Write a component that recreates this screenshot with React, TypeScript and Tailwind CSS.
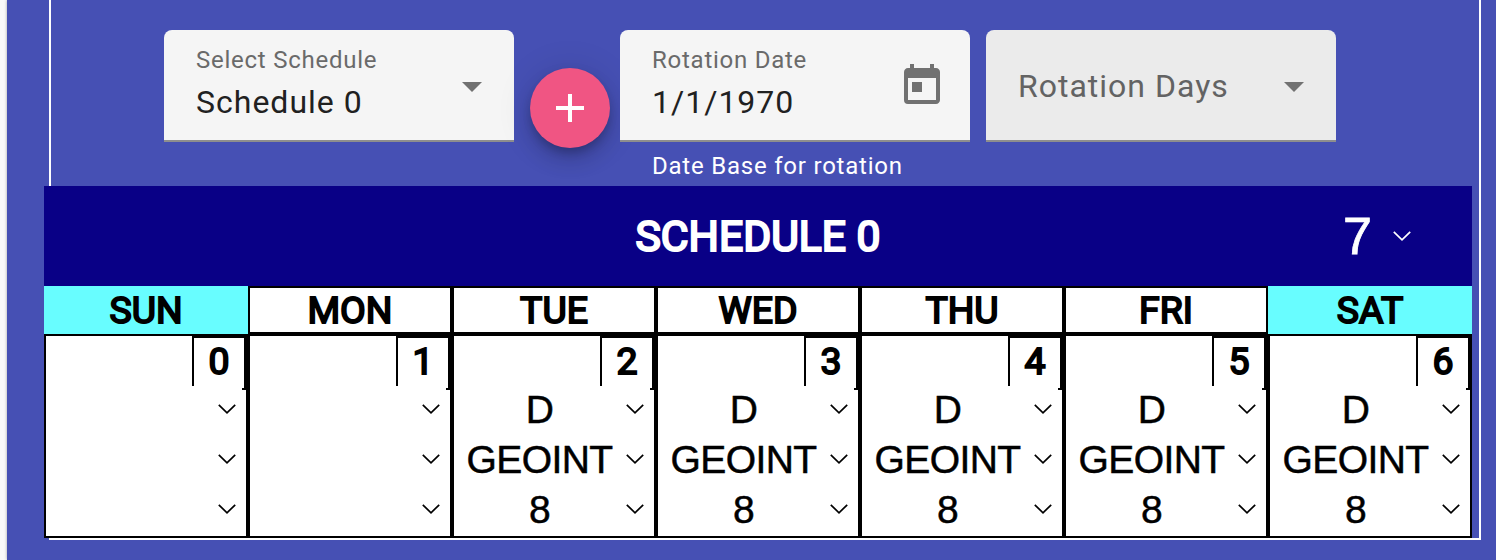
import type { ReactNode } from "react";
import { MdAdd, MdToday } from "react-icons/md";

type Day = { name: string; weekend?: boolean; values: [string, string, string] };

const EMPTY: [string, string, string] = ["", "", ""];
const SHIFT: [string, string, string] = ["D", "GEOINT", "8"];

const DAYS: Day[] = [
  { name: "SUN", weekend: true, values: EMPTY },
  { name: "MON", values: EMPTY },
  { name: "TUE", values: SHIFT },
  { name: "WED", values: SHIFT },
  { name: "THU", values: SHIFT },
  { name: "FRI", values: SHIFT },
  { name: "SAT", weekend: true, values: SHIFT },
];

function Caret() {
  return (
    <svg className="h-2.5 w-5 shrink-0 text-[#717171]" viewBox="0 0 20 10" fill="currentColor">
      <path d="M0 0h20L10 10z" />
    </svg>
  );
}

function Chevron() {
  return (
    <svg
      className="h-[10px] w-[18px] shrink-0"
      viewBox="0 0 18 10"
      fill="none"
      stroke="currentColor"
      strokeWidth="1.7"
    >
      <path d="M0.8 0.8 9 8.8 17.2 0.8" />
    </svg>
  );
}

function Field({
  label,
  value,
  disabled,
  children,
}: {
  label: string;
  value?: string;
  disabled?: boolean;
  children: ReactNode;
}) {
  return (
    <div
      className={`flex h-28 w-[350px] items-start justify-between rounded-t-lg border-b-2 border-[#8e8e8e] pl-8 ${
        disabled ? "bg-[#ebebeb]" : "bg-[#f5f5f5]"
      }`}
    >
      {value ? (
        <div className="flex flex-col pt-4">
          <span className="text-[24px] leading-7 tracking-[0.75px] text-[#6a6a6a]">{label}</span>
          <span className="pt-1 text-[32px] leading-12 tracking-[1px] text-[#212121]">{value}</span>
        </div>
      ) : (
        <span className="pt-8 text-[32px] leading-12 tracking-[1px] text-[#636363]">{label}</span>
      )}
      {children}
    </div>
  );
}

function DayCell({ index, values }: { index: number; values: string[] }) {
  return (
    <div className="flex h-[204px] w-[204px] flex-col border-2 border-black bg-white">
      <div className="flex h-[54px] w-[54px] shrink-0 justify-center self-end border-2 border-black text-[37.4px] leading-[47px] font-normal [-webkit-text-stroke:1.9px_black]">
        {index}
      </div>
      <div className="relative -mt-1 flex w-[196px] flex-col bg-white font-['Liberation_Sans',Arial,sans-serif]">
        {values.map((value, i) => (
          <div key={i} className="flex h-[50px] items-center justify-end pr-1.5 pb-1">
            <span className="flex-1 pt-0.5 pr-px text-center text-[39px] leading-[46px] tracking-[-0.6px] [-webkit-text-stroke:0.5px_black]">
              {value}
            </span>
            <Chevron />
          </div>
        ))}
      </div>
    </div>
  );
}

export default function App() {
  return (
    <div className="flex h-[560px] w-[1496px] overflow-hidden bg-[#fafafa] font-['Roboto',sans-serif] text-black">
      <div className="ml-[7px] flex flex-1 items-start bg-[#4650b4] pl-[42px] shadow-[0_0_3px_rgba(0,0,0,0.35)]">
        <div className="flex h-[540px] w-[1432px] flex-col border-x-2 border-b-2 border-white">
          <div className="flex h-[186px] items-start pt-[30px] pl-[113px]">
            <Field label="Select Schedule" value="Schedule 0">
              <div className="pt-[52px] pr-8">
                <Caret />
              </div>
            </Field>
            <button className="mt-[38px] mr-2.5 ml-4 flex h-20 w-20 items-center justify-center rounded-full bg-[#f05583] text-white shadow-[0_6px_10px_-2px_rgba(0,0,0,0.2),0_12px_20px_0_rgba(0,0,0,0.14),0_2px_36px_0_rgba(0,0,0,0.12)]">
              <MdAdd className="h-12 w-12" />
            </button>
            <div className="mr-4 flex flex-col">
              <Field label="Rotation Date" value="1/1/1970">
                <MdToday className="mt-8 mr-6 h-12 w-12 text-[#717171]" />
              </Field>
              <span className="pt-2 pl-8 text-[24px] leading-8 tracking-[0.78px] text-white">
                Date Base for rotation
              </span>
            </div>
            <Field label="Rotation Days" disabled>
              <div className="pt-[52px] pr-8">
                <Caret />
              </div>
            </Field>
          </div>

          <div className="-ml-[7px] flex w-[1428px] flex-col">
            <div className="grid h-[100px] grid-cols-7 items-center bg-[#090086] text-white">
              <h1 className="col-span-5 col-start-2 text-center text-[42.6px] leading-[100px] font-normal [-webkit-text-stroke:2.2px_white]">
                SCHEDULE 0
              </h1>
              <div className="flex items-center justify-end pr-[61px] font-['Liberation_Sans',Arial,sans-serif]">
                <span className="pr-[21px] text-[52px] leading-[100px] [-webkit-text-stroke:0.8px_white]">7</span>
                <Chevron />
              </div>
            </div>
            <div className="grid grid-cols-7">
              {DAYS.map((day) => (
                <div
                  key={day.name}
                  className={`flex h-12 items-center justify-center pb-px text-[37.4px] leading-[46px] font-normal [-webkit-text-stroke:1.9px_black] ${
                    day.weekend ? "bg-[#68fdff]" : "border-2 border-black bg-white"
                  }`}
                >
                  {day.name}
                </div>
              ))}
            </div>
            <div className="grid grid-cols-7">
              {DAYS.map((day, i) => (
                <DayCell key={day.name} index={i} values={day.values} />
              ))}
            </div>
          </div>
        </div>
      </div>
    </div>
  );
}
